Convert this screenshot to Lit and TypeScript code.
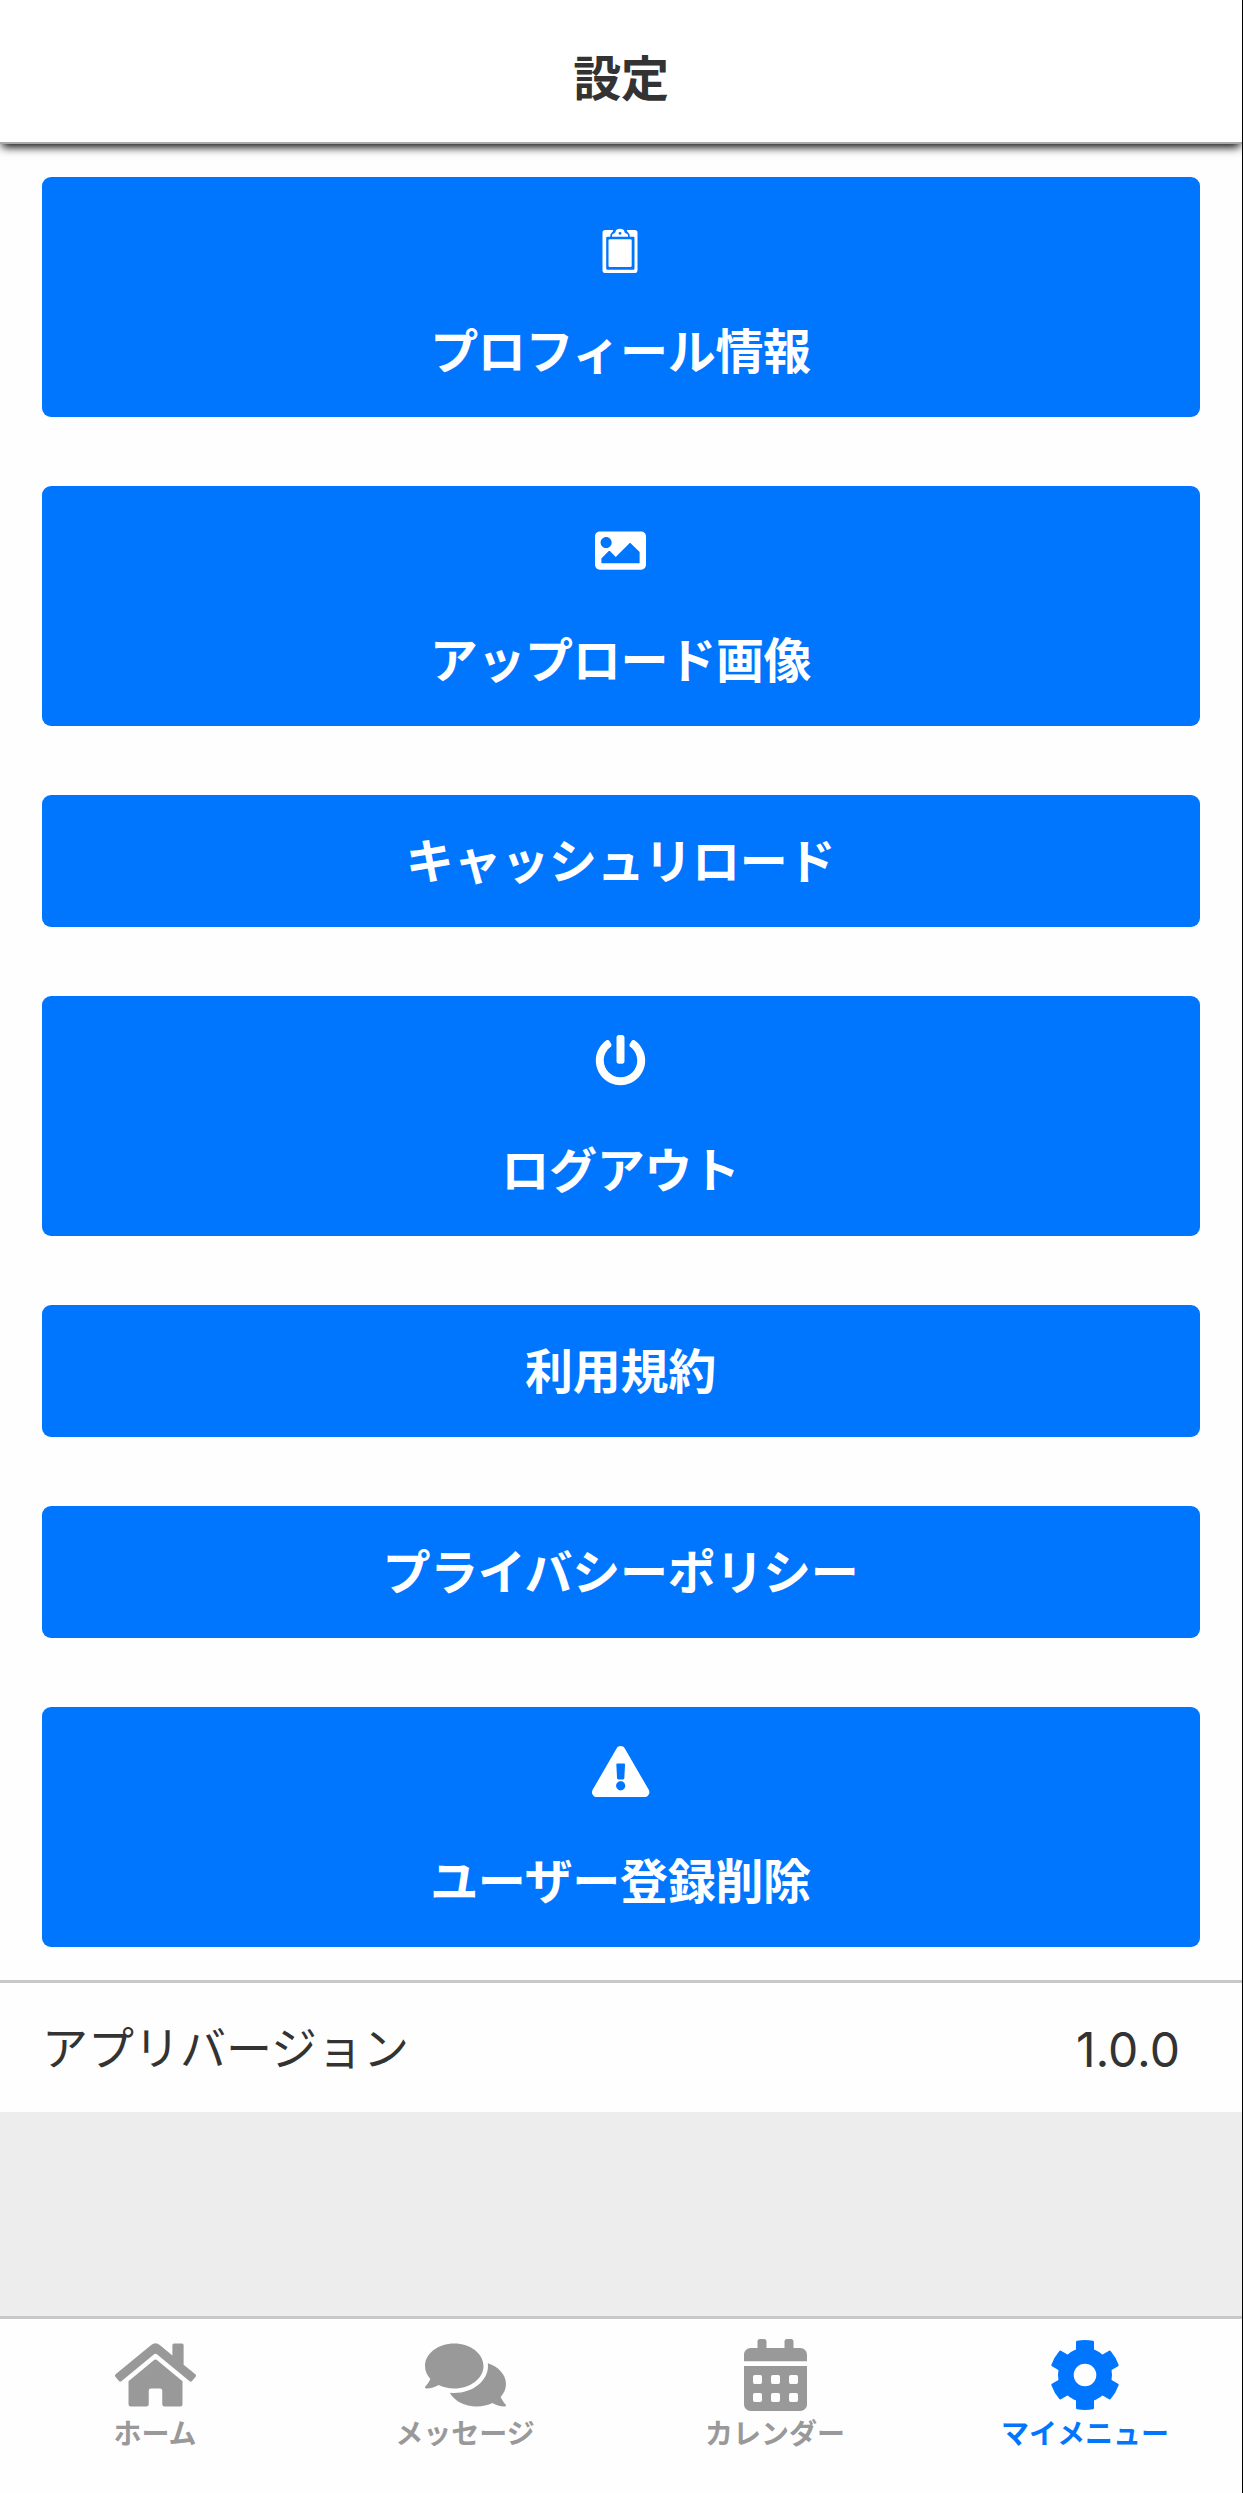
import { LitElement, html, css, svg } from "lit";
import { customElement } from "lit/decorators.js";

const icons: Record<string, { box: string; body: unknown }> = {
  clipboard: {
    box: "0 0 51 51",
    body: svg`
      <path d="M10.300 14H18.300Q18 15.800 16.600 16.800Q15.200 17.600 15.200 20.700H12.400Q11.200 20.700 11.200 21.900V52.600Q11.200 53.800 12.400 53.800H38.300Q39.500 53.800 39.500 52.600V21.900Q39.500 20.700 38.300 20.700H34.800Q34.800 17.600 33.400 16.800Q32 15.800 31.700 14H39.700Q42.500 14 42.500 16.800V54.300Q42.500 57.100 39.700 57.100H10.300Q7.500 57.100 7.500 54.300V16.800Q7.500 14 10.300 14Z"/>
      <rect x="13.500" y="23.200" width="23.200" height="27.700" rx="1.200"/>
      <path fill-rule="evenodd" d="M17 20.700V19.500Q17 17.900 18.600 17.600Q20.200 17.300 20.400 16A4.700 4 0 0 1 29.600 16Q29.800 17.300 31.400 17.600Q33 17.900 33 19.500V20.700ZM25 15.900A1.450 1.450 0 1 0 25 18.800A1.450 1.450 0 1 0 25 15.900Z"/>`,
  },
  image: {
    box: "0 0 512 512",
    body: svg`<path d="M464 448H48c-26.510 0-48-21.490-48-48V112c0-26.510 21.490-48 48-48h416c26.510 0 48 21.490 48 48v288c0 26.510-21.490 48-48 48zM112 120c-30.928 0-56 25.072-56 56s25.072 56 56 56 56-25.072 56-56-25.072-56-56-56zM64 384h384V272l-87.515-87.515c-4.686-4.686-12.284-4.686-16.971 0L208 320l-55.515-55.515c-4.686-4.686-12.284-4.686-16.971 0L64 336v48z"/>`,
  },
  power: {
    box: "0 0 512 512",
    body: svg`<path d="M400 54.100c63 45 104 118.600 104 201.900 0 136.800-110.800 247.700-247.500 248C120 504.300 8.200 393 8 256.400 7.900 173.100 48.900 99.300 111.800 54.200c11.700-8.300 28-4.800 35 7.700L162.600 90c5.900 10.500 3.100 23.800-6.600 31-41.500 30.800-68 79.600-68 134.900-.1 92.300 74.500 168.100 168 168.100 91.600 0 168.600-74.200 168-169.100-.3-51.800-24.700-101.800-68.100-134-9.700-7.200-12.400-20.500-6.500-30.900l15.800-28.100c7-12.400 23.200-16.100 34.800-7.800zM296 264V24c0-13.300-10.700-24-24-24h-32c-13.300 0-24 10.700-24 24v240c0 13.300 10.700 24 24 24h32c13.300 0 24-10.700 24-24z"/>`,
  },
  warning: {
    box: "0 0 576 512",
    body: svg`<path d="M569.517 440.013C587.975 472.007 564.806 512 527.940 512H48.054c-36.937 0-59.999-40.055-41.577-71.987L246.423 23.985c18.467-32.009 64.720-31.951 83.154 0l239.940 416.028zM288 354c-25.405 0-46 20.595-46 46s20.595 46 46 46 46-20.595 46-46-20.595-46-46-46zm-43.673-165.346l7.418 136c.347 6.364 5.609 11.346 11.982 11.346h48.546c6.373 0 11.635-4.982 11.982-11.346l7.418-136c.375-6.874-5.098-12.654-11.982-12.654h-63.383c-6.884 0-12.356 5.780-11.981 12.654z"/>`,
  },
  home: {
    box: "0 0 576 512",
    body: svg`<path d="M280.370 148.260L96 300.110V464a16 16 0 0 0 16 16l112.060-.29a16 16 0 0 0 15.920-16V368a16 16 0 0 1 16-16h64a16 16 0 0 1 16 16v95.640a16 16 0 0 0 16 16.050L464 480a16 16 0 0 0 16-16V300L295.670 148.260a12.190 12.190 0 0 0-15.300 0zM571.600 251.470L488 182.560V44.050a12 12 0 0 0-12-12h-56a12 12 0 0 0-12 12v72.610L318.470 43a48 48 0 0 0-61 0L4.340 251.470a12 12 0 0 0-1.600 16.900l25.500 31A12 12 0 0 0 45.150 301l235.220-193.740a12.190 12.190 0 0 1 15.300 0L530.900 301a12 12 0 0 0 16.900-1.600l25.500-31a12 12 0 0 0-1.700-16.930z"/>`,
  },
  comments: {
    box: "0 0 576 512",
    body: svg`<path d="M416 192c0-88.400-93.100-160-208-160S0 103.600 0 192c0 34.300 14.100 65.900 38 92-13.400 30.200-35.500 54.200-35.800 54.500-2.200 2.300-2.800 5.700-1.500 8.700S4.800 352 8 352c36.600 0 66.900-12.300 88.700-25 32.200 15.700 70.300 25 111.300 25 114.900 0 208-71.600 208-160zm122 220c23.900-26 38-57.700 38-92 0-66.900-53.500-124.200-129.300-148.100.9 6.600 1.300 13.300 1.300 20.100 0 105.900-107.700 192-240 192-10.800 0-21.300-.8-31.700-1.900C207.800 439.600 281.800 480 368 480c41 0 79.100-9.200 111.300-25 21.800 12.700 52.100 25 88.700 25 3.200 0 6.100-1.900 7.300-4.800 1.300-2.900.7-6.300-1.500-8.700-.3-.3-22.400-24.200-35.800-54.500z"/>`,
  },
  calendar: {
    box: "0 0 448 512",
    body: svg`<path fill-rule="evenodd" d="M400 64h-48V16c0-8.800-7.200-16-16-16h-32c-8.800 0-16 7.200-16 16v48H160V16c0-8.800-7.200-16-16-16h-32c-8.800 0-16 7.200-16 16v48H48C21.500 64 0 85.500 0 112v46h448v-46c0-26.500-21.500-48-48-48zM0 464c0 26.500 21.500 48 48 48h352c26.500 0 48-21.500 48-48V192H0z
      ${[256, 384].map((y) => [64, 192, 320].map((x) => `M${x + 12} ${y}h40q12 0 12 12v40q0 12-12 12h-40q-12 0-12-12v-40q0-12 12-12z`).join("")).join("")}"/>`,
  },
  cog: {
    box: "-36 -36 72 72",
    body: svg`
      <path fill-rule="evenodd" d="M-27 0A27 27 0 1 1 27 0A27 27 0 1 1-27 0ZM-11.300 0A11.300 11.300 0 1 0 11.300 0A11.300 11.300 0 1 0-11.300 0Z"/>
      ${[0, 60, 120, 180, 240, 300].map(
        (a) => svg`<path transform=${`rotate(${a})`} d="M-9-23V-33Q-9-34-8-34.200Q0-35.700 8-34.200Q9-34 9-33V-23Z"/>`,
      )}`,
  },
};

const icon = (name: string) =>
  html`<svg class="icon" viewBox=${icons[name].box} aria-hidden="true">${icons[name].body}</svg>`;

const actions: { label: string; icon?: string }[] = [
  { label: "プロフィール情報", icon: "clipboard" },
  { label: "アップロード画像", icon: "image" },
  { label: "キャッシュリロード" },
  { label: "ログアウト", icon: "power" },
  { label: "利用規約" },
  { label: "プライバシーポリシー" },
  { label: "ユーザー登録削除", icon: "warning" },
];

const tabs = [
  { label: "ホーム", icon: "home" },
  { label: "メッセージ", icon: "comments" },
  { label: "カレンダー", icon: "calendar" },
  { label: "マイメニュー", icon: "cog", active: true },
];

@customElement("app-root")
export class AppRoot extends LitElement {
  static styles = css`
    :host {
      display: flex;
      flex-direction: column;
      box-sizing: border-box;
      height: 2493px;
      border-right: 1px solid #000;
      background: #ededed;
      color: #333;
      font-family: "Noto Sans CJK JP", sans-serif;
      overflow: hidden;
    }
    * { box-sizing: border-box; }
    .icon { display: block; fill: currentColor; overflow: visible; }
    .header {
      height: 144px;
      flex: none;
      padding-top: 8px;
      display: flex;
      align-items: center;
      justify-content: center;
      background: #fff;
      border-bottom: 2px solid #aaa;
      box-shadow: 0 5px 9px -2px #000;
      z-index: 1;
      font-size: 48px;
      font-weight: 700;
      line-height: 54px;
    }
    .title, .action-label { letter-spacing: -0.3px; }
    .actions {
      flex: none;
      display: flex;
      flex-direction: column;
      gap: 69px;
      padding: 33px 42px;
      background: #fefefe;
    }
    .action {
      display: flex;
      flex-direction: column;
      align-items: center;
      padding: 39px 1px 42px 0;
      border: 0;
      border-radius: 9px;
      background: #0076ff;
      color: #fff;
      font: 700 48px/54px "Noto Sans CJK JP", sans-serif;
    }
    .action .icon { height: 51px; margin-bottom: 57px; }
    .action-label { margin-top: -3px; }
    .version {
      flex: none;
      height: 132px;
      display: flex;
      justify-content: space-between;
      align-items: center;
      padding: 0 62px 0 42px;
      border-top: 3px solid #c8c8c8;
      background: #fefefe;
      font-size: 46px;
    }
    .version-label { padding-bottom: 5px; }
    .number { padding-top: 3px; font-family: Inter, sans-serif; font-size: 48px; }
    .tabs {
      height: 177px;
      flex: none;
      margin-top: auto;
      padding-right: 2px;
      display: grid;
      grid-template-columns: repeat(4, 1fr);
      border-top: 3px solid #c8c8c8;
      background: #fefefe;
    }
    .tab {
      display: flex;
      flex-direction: column;
      align-items: center;
      padding-top: 20px;
      color: #999;
      font-size: 28px;
      font-weight: 700;
      line-height: 42px;
    }
    .tab.active { color: #0076ff; }
    .tab .icon { height: 72px; }
  `;

  render() {
    return html`
      <header class="header"><span class="title">設定</span></header>
      <main class="actions">
        ${actions.map(
          (a) => html`<button class="action">
            ${a.icon ? icon(a.icon) : ""}<span class="action-label">${a.label}</span>
          </button>`,
        )}
      </main>
      <section class="version">
        <span class="version-label">アプリバージョン</span><span class="number">1.0.0</span>
      </section>
      <nav class="tabs">
        ${tabs.map((t) => html`<a class="tab ${t.active ? "active" : ""}">${icon(t.icon)}<span>${t.label}</span></a>`)}
      </nav>
    `;
  }
}
